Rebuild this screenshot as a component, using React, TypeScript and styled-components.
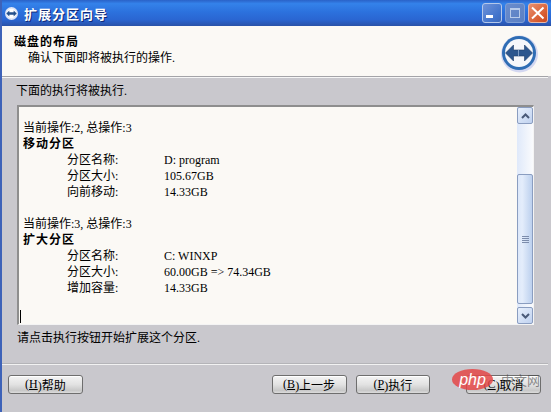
import React from "react";
import styled, { createGlobalStyle } from "styled-components";

const SERIF = `"Liberation Serif", "Noto Sans CJK SC", serif`;

const GlobalStyle = createGlobalStyle`
  html, body {
    margin: 0;
    padding: 0;
    background: #c9c8cd;
  }
`;

const Window = styled.div`
  width: 551px;
  height: 412px;
  overflow: hidden;
  position: relative;
  display: flex;
  flex-direction: column;
  box-sizing: border-box;
  background: #c9c8cd;
  border-left: 2px solid #3d62b8;
  font-family: ${SERIF};
  font-size: 12px;
  color: #000;
`;

const TitleBar = styled.div`
  flex: none;
  height: 26px;
  margin-left: -2px;
  padding: 0 3px 0 5px;
  display: flex;
  align-items: center;
  gap: 6px;
  background: linear-gradient(#2a62c8 0%, #3482ea 14%, #2c72de 45%, #2a66d2 75%, #2a52a8 100%);
`;

const TitleText = styled.div`
  flex: 1;
  color: #fff;
  font-weight: 700;
  font-size: 13px;
  letter-spacing: 1px;
  text-shadow: 1px 1px 0 #102a78;
`;

const CaptionButtons = styled.div`
  display: flex;
  gap: 3px;
`;

const CaptionButton = styled.div<{ $kind?: "close" | "off" }>`
  width: 18px;
  height: 18px;
  border: 1px solid
    ${(p) => (p.$kind === "close" ? "#e8b8a8" : p.$kind === "off" ? "#7f9fd6" : "#b4c8ea")};
  border-radius: 3px;
  display: flex;
  align-items: center;
  justify-content: center;
  background: ${(p) =>
    p.$kind === "close"
      ? "linear-gradient(135deg, #e89070, #d85c30 70%, #c84a24)"
      : p.$kind === "off"
        ? "linear-gradient(135deg, #6a8ccc, #5a80c4)"
        : "linear-gradient(135deg, #6e92d8, #4274cc 70%, #3c68b8)"};
`;

const Header = styled.div`
  flex: none;
  height: 50px;
  padding: 0 13px 0 12px;
  display: flex;
  align-items: flex-start;
  justify-content: space-between;
  background: #fbf9f5;
`;

const HeaderText = styled.div`
  padding-top: 8px;
`;

const HeaderTitle = styled.div`
  font-weight: 700;
  letter-spacing: 1px;
  line-height: 16px;
`;

const HeaderSub = styled.div`
  padding-left: 14px;
  line-height: 16px;
`;

const HeaderRule = styled.div`
  flex: none;
  height: 2px;
  margin-right: 3px;
  box-sizing: border-box;
  border-top: 1px solid #a4a4a8;
  border-bottom: 1px solid #f6f6f6;
`;

const Body = styled.div`
  flex: 1;
  padding: 5px 17px 0 15px;
  display: flex;
  flex-direction: column;
`;

const Caption = styled.div`
  margin-left: -1px;
  line-height: 16px;
`;

const LogBox = styled.div`
  flex: none;
  margin-top: 6px;
  height: 220px;
  display: flex;
  box-sizing: border-box;
  background: #fbf9f5;
  border-top: 2px solid #8e8e8e;
  border-left: 2px solid #8e8e8e;
  border-right: 1px solid #f4f4f4;
  border-bottom: 1px solid #f4f4f4;
`;

const LogText = styled.div`
  flex: 1;
  padding: 13px 0 0 4px;
  line-height: 16px;
`;

const Bold = styled.div`
  font-weight: 700;
  letter-spacing: 1px;
`;

const Row = styled.div`
  display: grid;
  grid-template-columns: 97px 1fr;
  padding-left: 44px;
`;

const Spacer = styled.div`
  height: 16px;
`;

const Caret = styled.div`
  width: 1px;
  height: 13px;
  margin: 14px 0 0 -3px;
  background: #000;
`;

const ScrollBar = styled.div`
  width: 16px;
  display: flex;
  flex-direction: column;
  background: linear-gradient(90deg, #dfe9fa, #fafbfd);
`;

const ScrollArrow = styled.div`
  flex: none;
  height: 17px;
  box-sizing: border-box;
  display: flex;
  align-items: center;
  justify-content: center;
  border: 1px solid #8a9dc0;
  border-radius: 2px;
  background: linear-gradient(135deg, #e8f0fc, #c0d2f0);
`;

const ScrollTrack = styled.div`
  flex: none;
  height: 50px;
`;

const ScrollThumb = styled.div`
  flex: 1;
  margin-bottom: 3px;
  box-sizing: border-box;
  display: flex;
  align-items: center;
  justify-content: center;
  border: 1px solid #8a9dc0;
  border-radius: 2px;
  background: linear-gradient(90deg, #dde8fa, #e4edfb 30%, #bcd0ee);
`;

const Hint = styled.div`
  margin-top: 5px;
  line-height: 16px;
`;

const Divider = styled.div`
  margin: 17px -14px 0 -15px;
  height: 2px;
  box-sizing: border-box;
  border-top: 1px solid #b4b4b8;
  border-bottom: 1px solid #f2f2f2;
`;

const Footer = styled.div`
  margin: 10px -7px 0 -9px;
  display: flex;
  align-items: center;
  gap: 9px;
`;

const Button = styled.div<{ $gap?: number }>`
  width: 75px;
  height: 19px;
  margin-left: ${(p) => p.$gap ?? 0}px;
  box-sizing: border-box;
  display: flex;
  align-items: center;
  justify-content: center;
  border: 1px solid #6e6e6e;
  border-radius: 3px;
  box-shadow: inset 0 1px 0 #fff;
  background: linear-gradient(#f4f4f4, #e2e2e2 50%, #c8c8c8 85%, #dcdcdc);
`;

const Access = styled.span`
  text-decoration: underline;
`;

const Watermark = styled.div`
  position: absolute;
  left: 450px;
  top: 369px;
  display: flex;
  align-items: center;
  gap: 8px;
`;

const PhpBadge = styled.div`
  width: 41px;
  height: 21px;
  border-radius: 50%;
  display: flex;
  align-items: center;
  justify-content: center;
  background: rgba(228, 72, 72, 0.85);
  color: #fff;
  font-family: "Liberation Sans", sans-serif;
  font-size: 16px;
  font-style: italic;
`;

const WatermarkText = styled.div`
  font-family: "Noto Sans CJK SC", sans-serif;
  font-size: 13px;
  color: rgba(70, 70, 70, 0.6);
`;

const WizardIcon = () => (
  <svg width="37" height="38" viewBox="0 0 37 38" style={{ marginTop: 9 }}>
    <circle cx="18.5" cy="19" r="18.5" fill="#d3d7f0" />
    <circle cx="18" cy="18" r="17" fill="#2f6db4" />
    <circle cx="18" cy="18" r="14" fill="#f6f7fa" />
    <path d="M4.5 18l8-8v5h11v-5l8 8-8 8v-5h-11v5z" fill="#2d578e" stroke="#1e3c68" strokeWidth="0.6" />
    <path d="M17.5 15v6" stroke="#7d9cc4" strokeWidth="1" />
  </svg>
);

const TitleIcon = () => (
  <svg width="13" height="13" viewBox="0 0 15 15">
    <circle cx="7.5" cy="7.5" r="7.5" fill="#dfe6f6" />
    <circle cx="7.5" cy="7.5" r="5.4" fill="#fff" />
    <path d="M1.5 7.5l3.5-3.5v2h5v-2l3.5 3.5-3.5 3.5v-2H5v2z" fill="#24508c" />
  </svg>
);

const Chevron = ({ up }: { up?: boolean }) => (
  <svg width="9" height="6" viewBox="0 0 9 6">
    <path
      d={up ? "M1 5l3.5-3.5L8 5" : "M1 1l3.5 3.5L8 1"}
      fill="none"
      stroke="#4a5a78"
      strokeWidth="2"
    />
  </svg>
);

const Grip = () => (
  <svg width="7" height="7" viewBox="0 0 7 7">
    <path d="M0 .5h7M0 2.5h7M0 4.5h7M0 6.5h7" stroke="#7c8cab" strokeWidth="1" />
  </svg>
);

const App = () => {
  return (
    <>
      <GlobalStyle />
      <Window>
        <TitleBar>
          <TitleIcon />
          <TitleText>扩展分区向导</TitleText>
          <CaptionButtons>
            <CaptionButton>
              <svg width="18" height="18" viewBox="0 0 18 18">
                <rect x="3" y="11" width="7" height="3" fill="#fff" />
              </svg>
            </CaptionButton>
            <CaptionButton $kind="off">
              <svg width="18" height="18" viewBox="0 0 18 18">
                <rect x="4.5" y="4.5" width="9" height="9" fill="none" stroke="#b8cbea" />
                <rect x="4" y="4" width="10" height="2" fill="#b8cbea" />
              </svg>
            </CaptionButton>
            <CaptionButton $kind="close">
              <svg width="18" height="18" viewBox="0 0 18 18">
                <path d="M3 3.5l11.5 11M14.5 3.5L3 14.5" stroke="#fff" strokeWidth="2" />
              </svg>
            </CaptionButton>
          </CaptionButtons>
        </TitleBar>
        <Header>
          <HeaderText>
            <HeaderTitle>磁盘的布局</HeaderTitle>
            <HeaderSub>确认下面即将被执行的操作.</HeaderSub>
          </HeaderText>
          <WizardIcon />
        </Header>
        <HeaderRule />
        <Body>
          <Caption>下面的执行将被执行.</Caption>
          <LogBox>
            <LogText>
              <div>当前操作:2, 总操作:3</div>
              <Bold>移动分区</Bold>
              <Row><span>分区名称:</span><span>D: program</span></Row>
              <Row><span>分区大小:</span><span>105.67GB</span></Row>
              <Row><span>向前移动:</span><span>14.33GB</span></Row>
              <Spacer />
              <div>当前操作:3, 总操作:3</div>
              <Bold>扩大分区</Bold>
              <Row><span>分区名称:</span><span>C: WINXP</span></Row>
              <Row><span>分区大小:</span><span>60.00GB =&gt; 74.34GB</span></Row>
              <Row><span>增加容量:</span><span>14.33GB</span></Row>
              <Caret />
            </LogText>
            <ScrollBar>
              <ScrollArrow><Chevron up /></ScrollArrow>
              <ScrollTrack />
              <ScrollThumb><Grip /></ScrollThumb>
              <ScrollArrow><Chevron /></ScrollArrow>
            </ScrollBar>
          </LogBox>
          <Hint>请点击执行按钮开始扩展这个分区.</Hint>
          <Divider />
          <Footer>
            <Button>(<Access>H</Access>)帮助</Button>
            <Button $gap={180}>(<Access>B</Access>)上一步</Button>
            <Button>(<Access>P</Access>)执行</Button>
            <Button $gap={27}>(<Access>C</Access>)取消</Button>
          </Footer>
        </Body>
        <Watermark>
          <PhpBadge>php</PhpBadge>
          <WatermarkText>中文网</WatermarkText>
        </Watermark>
      </Window>
    </>
  );
};

export default App;
